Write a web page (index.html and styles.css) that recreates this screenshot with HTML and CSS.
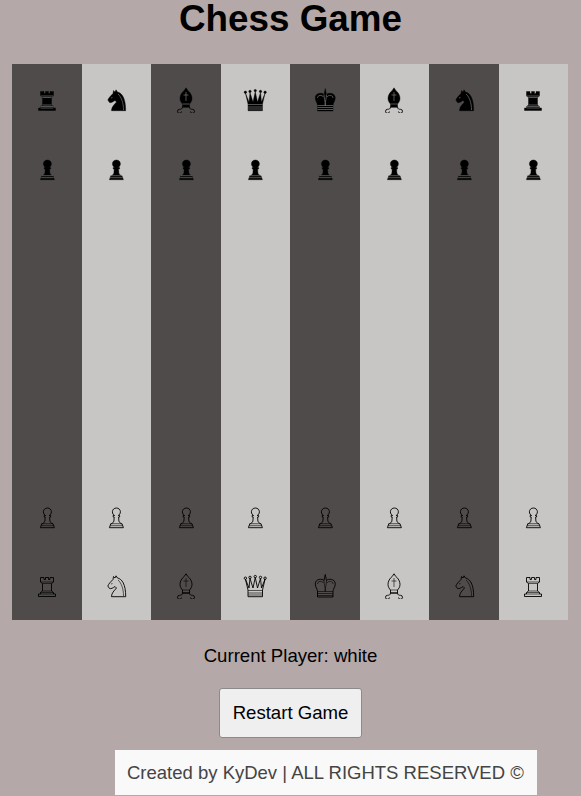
FILE: index.html
```html
<!DOCTYPE html>
<html lang="en">
<head>
    <meta charset="UTF-8">
    <meta name="viewport" content="width=device-width, initial-scale=1.0">
    <title>Chess Game</title>
    <link rel="stylesheet" href="styles.css">
</head>
<body>
    <svg class="defs" width="0" height="0">
        <symbol id="rook" viewBox="0 0 28 28">
            <path d="M7.5 6.5H11V8.5H12.5V6.5H15.5V8.5H17V6.5H20.5V11L18.5 12.5V20L20.5 21.5V23H22.5V25.5H5.5V23H7.5V21.5L9.5 20V12.5L7.5 11Z"/>
            <path class="detail" d="M7.5 11H20.5M9.5 12.5H18.5M9.5 20H18.5M7.5 21.5H20.5M7.5 23H20.5"/>
        </symbol>
        <symbol id="knight" viewBox="0 0 28 28">
            <path d="M14 4.8L15.5 7C20 8 23.7 13 23.7 25.7H9.5C9.5 22 12 20 14.5 17L13 15.5C11 17 9 18 7.5 17.5L5.8 15C6.5 13 9 10.5 11 8.5L11.5 5.5L13 7Z"/>
            <path class="detail" d="M16 9C19.5 12 21.5 18 21.5 25M9 13L10.5 12.5"/>
        </symbol>
        <symbol id="bishop" viewBox="0 0 28 28">
            <path d="M14 2.8L15.8 5.5C18.5 7.5 20 10.5 20 13.5C20 16 18.5 18 17.5 19V22H10.5V19C9.5 18 8 16 8 13.5C8 10.5 9.5 7.5 12.2 5.5Z"/>
            <path class="detail" d="M14 7V16M11.5 10H16.5M10.5 19H17.5"/>
            <path class="curl" d="M10.5 22C10.5 24 9 24.3 7.5 24.3A2 2 0 1 0 9.5 26.5M17.5 22C17.5 24 19 24.3 20.5 24.3A2 2 0 1 1 18.5 26.5M10.5 22H17.5"/>
        </symbol>
        <symbol id="queen" viewBox="0 0 28 28">
            <path d="M4.4 8L8 17L9 7.5L12 17L14.25 6.5L16.5 17L19.5 7.5L20.5 17L24.1 8L21.5 19V25.7H7V19Z"/>
            <path class="detail" d="M7 19.5H21.5M7 22H21.5M7 24H21.5"/>
            <circle cx="4.4" cy="7.2" r="1.2"/><circle cx="9" cy="6.4" r="1.2"/><circle cx="14.25" cy="5.6" r="1.2"/><circle cx="19.5" cy="6.4" r="1.2"/><circle cx="24.1" cy="7.2" r="1.2"/>
        </symbol>
        <symbol id="king" viewBox="0 0 28 28">
            <path d="M14.25 3.5L15.5 9.5C17 7.5 24.25 7.5 24.25 13C24.25 16 22 18 22 20.5V26H6.5V20.5C6.5 18 4.25 16 4.25 13C4.25 7.5 11.5 7.5 13 9.5Z"/>
            <path class="detail" d="M6.5 20.5H22M6.5 22.5H22M6.5 24.5H22M13 9.5C13 13 14.25 16 14.25 20.5C14.25 16 15.5 13 15.5 9.5M6.5 13C6.5 10 11 9.5 12.5 12M22 13C22 10 17.5 9.5 16 12"/>
        </symbol>
        <symbol id="pawn" viewBox="0 0 28 28">
            <path d="M14.4 6C16.6 6 18.4 7.6 18.4 9.8C18.4 11.5 17.4 12.9 16.2 13.5H17.6V15H16.6L16.9 19C17.2 20.5 18.5 21.3 19.5 21.7H20L21.4 25.7H7.4L8.8 21.7H9.3C10.3 21.3 11.6 20.5 11.9 19L12.2 15H11.2V13.5H12.6C11.4 12.9 10.4 11.5 10.4 9.8C10.4 7.6 12.2 6 14.4 6Z"/>
            <path class="detail" d="M8.8 21.7H20M8.2 23.7H20.6"/>
        </symbol>
    </svg>

    <h1>Chess Game</h1>
    <div class="board">
        <div class="cell dark"><svg class="piece black"><use href="#rook"/></svg></div>
        <div class="cell light"><svg class="piece black"><use href="#knight"/></svg></div>
        <div class="cell dark"><svg class="piece black"><use href="#bishop"/></svg></div>
        <div class="cell light"><svg class="piece black"><use href="#queen"/></svg></div>
        <div class="cell dark"><svg class="piece black"><use href="#king"/></svg></div>
        <div class="cell light"><svg class="piece black"><use href="#bishop"/></svg></div>
        <div class="cell dark"><svg class="piece black"><use href="#knight"/></svg></div>
        <div class="cell light"><svg class="piece black"><use href="#rook"/></svg></div>

        <div class="cell dark"><svg class="piece black"><use href="#pawn"/></svg></div>
        <div class="cell light"><svg class="piece black"><use href="#pawn"/></svg></div>
        <div class="cell dark"><svg class="piece black"><use href="#pawn"/></svg></div>
        <div class="cell light"><svg class="piece black"><use href="#pawn"/></svg></div>
        <div class="cell dark"><svg class="piece black"><use href="#pawn"/></svg></div>
        <div class="cell light"><svg class="piece black"><use href="#pawn"/></svg></div>
        <div class="cell dark"><svg class="piece black"><use href="#pawn"/></svg></div>
        <div class="cell light"><svg class="piece black"><use href="#pawn"/></svg></div>

        <div class="cell dark"></div><div class="cell light"></div><div class="cell dark"></div><div class="cell light"></div><div class="cell dark"></div><div class="cell light"></div><div class="cell dark"></div><div class="cell light"></div>
        <div class="cell dark"></div><div class="cell light"></div><div class="cell dark"></div><div class="cell light"></div><div class="cell dark"></div><div class="cell light"></div><div class="cell dark"></div><div class="cell light"></div>
        <div class="cell dark"></div><div class="cell light"></div><div class="cell dark"></div><div class="cell light"></div><div class="cell dark"></div><div class="cell light"></div><div class="cell dark"></div><div class="cell light"></div>
        <div class="cell dark"></div><div class="cell light"></div><div class="cell dark"></div><div class="cell light"></div><div class="cell dark"></div><div class="cell light"></div><div class="cell dark"></div><div class="cell light"></div>

        <div class="cell dark"><svg class="piece white"><use href="#pawn"/></svg></div>
        <div class="cell light"><svg class="piece white"><use href="#pawn"/></svg></div>
        <div class="cell dark"><svg class="piece white"><use href="#pawn"/></svg></div>
        <div class="cell light"><svg class="piece white"><use href="#pawn"/></svg></div>
        <div class="cell dark"><svg class="piece white"><use href="#pawn"/></svg></div>
        <div class="cell light"><svg class="piece white"><use href="#pawn"/></svg></div>
        <div class="cell dark"><svg class="piece white"><use href="#pawn"/></svg></div>
        <div class="cell light"><svg class="piece white"><use href="#pawn"/></svg></div>

        <div class="cell dark"><svg class="piece white"><use href="#rook"/></svg></div>
        <div class="cell light"><svg class="piece white"><use href="#knight"/></svg></div>
        <div class="cell dark"><svg class="piece white"><use href="#bishop"/></svg></div>
        <div class="cell light"><svg class="piece white"><use href="#queen"/></svg></div>
        <div class="cell dark"><svg class="piece white"><use href="#king"/></svg></div>
        <div class="cell light"><svg class="piece white"><use href="#bishop"/></svg></div>
        <div class="cell dark"><svg class="piece white"><use href="#knight"/></svg></div>
        <div class="cell light"><svg class="piece white"><use href="#rook"/></svg></div>
    </div>
    <p class="status">Current Player: white</p>
    <button class="restart">Restart Game</button>
    <div class="credit-row">
        <div class="credit">Created by KyDev | ALL RIGHTS RESERVED ©</div>
    </div>
</body>
</html>
```

FILE: styles.css
```css
body {
    font-family: "Liberation Sans", Arial, sans-serif;
    margin: 0;
    background-color: #b4a8a8;
    display: flex;
    flex-direction: column;
    align-items: center;
    height: 796px;
    overflow: hidden;
}
.defs {
    display: block;
}
h1 {
    margin: 0 0 27px;
    font-size: 36.8px;
    line-height: 37px;
    color: #000;
}
.board {
    display: grid;
    grid-template-columns: repeat(8, 69.5px);
    grid-auto-rows: 69.5px;
    margin-right: 1px;
}
.cell {
    display: flex;
    justify-content: center;
    align-items: center;
}
.dark {
    background-color: #4f4b4a;
}
.light {
    background-color: #c8c6c4;
}
.piece {
    width: 28px;
    height: 28px;
    overflow: visible;
}
.black {
    fill: #000;
    stroke: #000;
    stroke-width: 0.4;
    --detail: #8a8a8a;
    --curl: #000;
}
.white {
    fill: none;
    stroke: #000;
    stroke-width: 0.9;
    --detail: #000;
    --curl: #000;
}
.detail {
    fill: none;
    stroke: var(--detail);
    stroke-width: 0.6;
}
.curl {
    fill: none;
    stroke: var(--curl);
    stroke-width: 0.9;
}
.status {
    margin: 24.5px 0 22.5px;
    font-size: 18.6px;
    line-height: 21px;
}
.restart {
    width: 143px;
    height: 50px;
    font-family: inherit;
    font-size: 18.6px;
    color: #000;
    background-color: #efefef;
    border: 1px solid #8a8a8a;
    border-radius: 3px;
}
.credit-row {
    align-self: stretch;
    display: flex;
    padding: 12px 0 0 115px;
}
.credit {
    width: 422px;
    height: 45px;
    box-sizing: border-box;
    padding: 12px;
    font-size: 18.5px;
    line-height: 21px;
    white-space: nowrap;
    color: #444;
    background-color: #f9f9f9;
}
```
